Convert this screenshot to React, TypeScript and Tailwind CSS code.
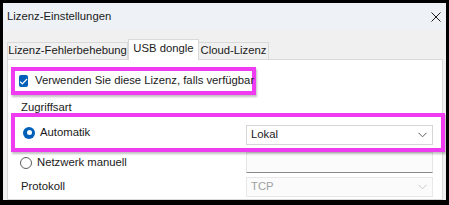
const font = "font-['Liberation_Sans',Arial,sans-serif]";

function Chevron({ color }: { color: string }) {
  return (
    <svg width="9" height="6" viewBox="0 0 9 6" fill="none">
      <path d="M0.5 0.8 L4.5 4.8 L8.5 0.8" stroke={color} strokeWidth="1" />
    </svg>
  );
}

function Radio({ checked }: { checked?: boolean }) {
  if (checked) {
    return (
      <span className="flex h-[12px] w-[12px] items-center justify-center rounded-full bg-[#005fb8]">
        <span className="h-[5px] w-[5px] rounded-full bg-white" />
      </span>
    );
  }
  return <span className="h-[12px] w-[12px] rounded-full border border-[#5c5c5c] bg-white" />;
}

export default function App() {
  return (
    <div className={`h-[205px] w-[449px] whitespace-nowrap bg-black pb-[5px] pl-[3px] pr-[3px] pt-[3px] text-[11.3px] text-[#1a1a1a] ${font}`}>
      <div className="flex h-full flex-col bg-[#f0f0f0]">
        {/* title bar */}
        <div className="flex h-[27px] shrink-0 items-center justify-between bg-[#eef2f7] pl-[4px] pr-[5px]">
          <span className="leading-none">Lizenz-Einstellungen</span>
          <svg width="10" height="10" viewBox="0 0 10 10">
            <path d="M0.5 0.5 L9.5 9.5 M9.5 0.5 L0.5 9.5" stroke="#1a1a1a" strokeWidth="1" />
          </svg>
        </div>

        {/* tabs */}
        <div className="mt-[9px] flex h-[20px] items-end pl-[4px]">
          <div className="flex h-[17px] w-[121px] items-center justify-center border border-b-0 border-[#d9d9d9] bg-[#f0f0f0] leading-none">
            Lizenz-Fehlerbehebung
          </div>
          <div className="relative z-10 -mb-px flex h-[21px] w-[71px] items-center justify-center border border-b-0 border-[#d9d9d9] bg-white pb-[2px] leading-none">
            USB dongle
          </div>
          <div className="flex h-[17px] w-[70px] items-center justify-center border border-b-0 border-l-0 border-[#d9d9d9] bg-[#f0f0f0] leading-none">
            Cloud-Lizenz
          </div>
        </div>

        {/* panel */}
        <div className="ml-[4px] mr-[3px] flex flex-1 flex-col border border-[#d9d9d9] bg-white">
          <div className="ml-[3px] mt-[7px] flex h-[28px] w-[245px] items-center gap-[7px] border-[4px] border-[#f03cf0] pl-[4px] shadow-[1px_2px_2px_rgba(0,0,0,0.25)]">
            <span className="flex h-[12px] w-[12px] items-center justify-center rounded-[2px] bg-[#005fb8]">
              <svg width="9" height="7" viewBox="0 0 9 7" fill="none">
                <path d="M1 3.6 L3.3 5.8 L8 1" stroke="white" strokeWidth="1.2" />
              </svg>
            </span>
            <span className="leading-none">Verwenden Sie diese Lizenz, falls verfügbar</span>
          </div>

          <div className="ml-[13px] flex h-[18px] items-end leading-none">Zugriffsart</div>

          <div className="relative z-10 ml-[3px] mr-[-3px] flex h-[39px] items-center justify-between border-[4px] border-[#f03cf0] pl-[8px] pr-[8px] shadow-[1px_2px_2px_rgba(0,0,0,0.25)]">
            <div className="flex items-center gap-[5px]">
              <Radio checked />
              <span className="leading-none">Automatik</span>
            </div>
            <div className="mt-[5px] flex h-[20px] w-[187px] items-center justify-between border border-[#d5d5d5] bg-white pl-[4px] pr-[5px]">
              <span className="leading-none">Lokal</span>
              <Chevron color="#606060" />
            </div>
          </div>

          <div className="flex h-[21px] items-center justify-between pl-[12px] pr-[9px]">
            <div className="flex items-center gap-[5px]">
              <Radio />
              <span className="leading-none">Netzwerk manuell</span>
            </div>
            <div className="h-[21px] w-[187px] border border-b-[#8a8a8a] border-[#e5e5e5] bg-[#fbfbfb]" />
          </div>

          <div className="mt-[4px] flex h-[20px] items-center justify-between pl-[13px] pr-[9px]">
            <span className="leading-none">Protokoll</span>
            <div className="flex h-[20px] w-[187px] items-center justify-between border border-[#e8e8e8] bg-[#fbfbfb] pl-[4px] pr-[5px]">
              <span className="leading-none text-[#a0a0a0]">TCP</span>
              <Chevron color="#c8c8c8" />
            </div>
          </div>
        </div>
      </div>
    </div>
  );
}
